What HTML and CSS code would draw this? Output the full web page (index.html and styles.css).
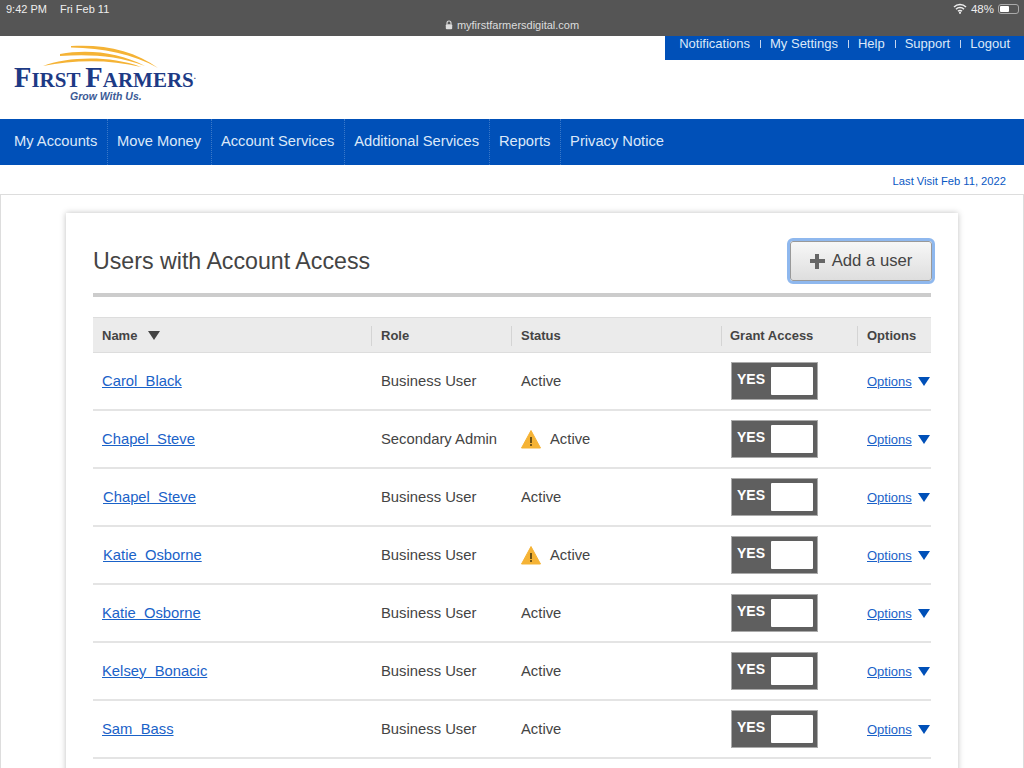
FILE: index.html
```html
<!DOCTYPE html>
<html>
<head>
	<meta http-equiv="Content-Type" content="text/html;charset=UTF-8">
	<title>Users with Account Access</title>
	<link rel="stylesheet" href="styles.css">
</head>
<body>
	<div class="statusbar">
		<div class="clock"><span>9:42 PM</span><span>Fri Feb 11</span></div>
		<div class="address">
			<svg width="8" height="10" viewBox="0 0 8 10"><path d="M2 4.5V3a2 2 0 0 1 4 0v1.5" fill="none" stroke="#ddd" stroke-width="1.1"/><rect x="0.8" y="4.3" width="6.4" height="5" rx="1" fill="#ddd"/></svg>
			<span>myfirstfarmersdigital.com</span>
		</div>
		<div class="sysicons">
			<svg width="14" height="11" viewBox="0 0 14 11"><path d="M1 4a8.5 8.5 0 0 1 12 0M3 6.2a5.6 5.6 0 0 1 8 0M5 8.3a2.8 2.8 0 0 1 4 0" fill="none" stroke="#eee" stroke-width="1.5"/><circle cx="7" cy="9.8" r="1.1" fill="#eee"/></svg>
			<span>48%</span>
			<span class="battery"><i></i></span>
		</div>
	</div>

	<div class="header">
		<div class="logo">
			<svg class="swoosh" width="116" height="24" viewBox="0 0 116 24"><path d="M0 21C24 12 66 10 98 22C66 14 30 15 0 21Z" fill="#f5b335"/><path d="M17 9C44 4 76 7 102 21C74 10 44 9 17 11Z" fill="#f5b335"/><path d="M28 1C62 -1 92 6 115 23C90 9 60 3 28 2.500Z" fill="#f5b335"/></svg>
			<div class="brand"><b>F</b>IRST <b>F</b>ARMERS<sup>.</sup></div>
			<div class="tagline">Grow With Us.</div>
		</div>
		<ul class="toplinks">
			<li>Notifications</li>
			<li>My Settings</li>
			<li>Help</li>
			<li>Support</li>
			<li>Logout</li>
		</ul>
	</div>

	<ul class="mainnav">
		<li>My Accounts</li>
		<li>Move Money</li>
		<li>Account Services</li>
		<li>Additional Services</li>
		<li>Reports</li>
		<li>Privacy Notice</li>
	</ul>

	<div class="lastvisit">Last Visit Feb 11, 2022</div>

	<div class="content">
		<div class="card">
			<div class="cardhead">
				<h1>Users with Account Access</h1>
				<a href="#" class="addbtn"><span class="plus"></span>Add a user</a>
			</div>
			<table class="users">
				<thead>
					<tr>
						<th class="c_name"><span>Name<i class="sortarrow"></i></span></th>
						<th class="c_role"><span>Role</span></th>
						<th class="c_status"><span>Status</span></th>
						<th class="c_grant"><span>Grant Access</span></th>
						<th class="c_opts"><span>Options</span></th>
					</tr>
				</thead>
				<tbody>
					<tr class="first">
						<td><a href="#">Carol&nbsp; Black</a></td>
						<td>Business User</td>
						<td>Active</td>
						<td><div class="toggle"><b>YES</b><i></i></div></td>
						<td><a href="#" class="optlink">Options</a><i class="optarrow"></i></td>
					</tr>
					<tr>
						<td><a href="#">Chapel&nbsp; Steve</a></td>
						<td>Secondary Admin</td>
						<td><div class="warned"><svg width="20" height="20" viewBox="0 0 20 20"><path d="M10 1.5L19.5 19H.5Z" fill="#f5b335" stroke="#f5b335" stroke-linejoin="round"/><path d="M10 8v6" stroke="#4a3a10" stroke-width="1.6"/><circle cx="10" cy="16" r="1" fill="#4a3a10"/></svg>Active</div></td>
						<td><div class="toggle"><b>YES</b><i></i></div></td>
						<td><a href="#" class="optlink">Options</a><i class="optarrow"></i></td>
					</tr>
					<tr>
						<td><a href="#" class="shift">Chapel&nbsp; Steve</a></td>
						<td>Business User</td>
						<td>Active</td>
						<td><div class="toggle"><b>YES</b><i></i></div></td>
						<td><a href="#" class="optlink">Options</a><i class="optarrow"></i></td>
					</tr>
					<tr>
						<td><a href="#" class="shift">Katie&nbsp; Osborne</a></td>
						<td>Business User</td>
						<td><div class="warned"><svg width="20" height="20" viewBox="0 0 20 20"><path d="M10 1.5L19.5 19H.5Z" fill="#f5b335" stroke="#f5b335" stroke-linejoin="round"/><path d="M10 8v6" stroke="#4a3a10" stroke-width="1.6"/><circle cx="10" cy="16" r="1" fill="#4a3a10"/></svg>Active</div></td>
						<td><div class="toggle"><b>YES</b><i></i></div></td>
						<td><a href="#" class="optlink">Options</a><i class="optarrow"></i></td>
					</tr>
					<tr>
						<td><a href="#">Katie&nbsp; Osborne</a></td>
						<td>Business User</td>
						<td>Active</td>
						<td><div class="toggle"><b>YES</b><i></i></div></td>
						<td><a href="#" class="optlink">Options</a><i class="optarrow"></i></td>
					</tr>
					<tr>
						<td><a href="#">Kelsey&nbsp; Bonacic</a></td>
						<td>Business User</td>
						<td>Active</td>
						<td><div class="toggle"><b>YES</b><i></i></div></td>
						<td><a href="#" class="optlink">Options</a><i class="optarrow"></i></td>
					</tr>
					<tr>
						<td><a href="#">Sam&nbsp; Bass</a></td>
						<td>Business User</td>
						<td>Active</td>
						<td><div class="toggle"><b>YES</b><i></i></div></td>
						<td><a href="#" class="optlink">Options</a><i class="optarrow"></i></td>
					</tr>
				</tbody>
			</table>
		</div>
	</div>
</body>
</html>
```

FILE: styles.css
```css
*{
	margin: 0;
	padding: 0;
	box-sizing: border-box;
}
html,body{
	height: 768px;
	overflow: hidden;
}
body{
	font-family: "Liberation Sans", Arial, sans-serif;
	color: #444;
	background-color: #fff;
}
ul{
	list-style: none;
}
.statusbar{
	height: 36px;
	background-color: #555;
	color: #eee;
	font-size: 11px;
	position: relative;
	display: flex;
	justify-content: space-between;
	padding: 3px 3px 0 6px;
}
.clock span{
	margin-right: 13px;
}
.address{
	position: absolute;
	left: 0;
	right: 0;
	top: 19px;
	display: flex;
	justify-content: center;
	align-items: center;
	gap: 4px;
	font-size: 11px;
	color: #ddd;
}
.sysicons{
	display: flex;
	align-items: flex-start;
	gap: 4px;
	font-size: 11.5px;
	height: 14px;
}
.battery{
	width: 21px;
	height: 10px;
	margin-top: 1px;
	border: 1px solid #aaa;
	border-radius: 3px;
	padding: 1px;
	margin-right: 2px;
}
.battery i{
	display: block;
	width: 9px;
	height: 6px;
	background-color: #fff;
	border-radius: 1px;
}
.header{
	height: 83px;
	display: flex;
	justify-content: space-between;
	align-items: flex-start;
}
.logo{
	width: 220px;
	padding: 9px 0 0 14px;
}
.swoosh{
	display: block;
	margin-left: 29px;
}
.brand{
	font-family: "Liberation Serif", serif;
	font-weight: bold;
	font-size: 21px;
	line-height: 22px;
	color: #1d3a85;
	white-space: nowrap;
	margin-top: -2px;
}
.brand b{
	font-size: 28.5px;
}
.brand sup{
	font-size: 8px;
	line-height: 0;
}
.tagline{
	font-size: 10.5px;
	line-height: 12px;
	font-style: italic;
	font-weight: bold;
	color: #3b5a96;
	margin: -1px 0 0 56px;
}
.toplinks{
	width: 359px;
	height: 24px;
	background-color: #0050b8;
	color: #dce8f8;
	font-size: 13px;
	display: flex;
	justify-content: flex-end;
	align-items: center;
	padding: 0 14px 9px 0;
}
.toplinks li + li{
	margin-left: 10px;
	padding-left: 10px;
	background: linear-gradient(#c5d5ee, #c5d5ee) left center / 1px 8px no-repeat;
}
.mainnav{
	height: 46px;
	background-color: #0050b8;
	color: #dce8f8;
	font-size: 14.7px;
	display: flex;
}
.mainnav li{
	padding: 0 9.4px;
	line-height: 45px;
	border-right: 1px dotted #3a78c8;
}
.mainnav li:first-child{
	padding-left: 14px;
}
.mainnav li:last-child{
	border-right: 0;
}
.lastvisit{
	height: 29px;
	text-align: right;
	font-size: 11.2px;
	line-height: 32px;
	color: #0a58c4;
	padding-right: 18px;
}
.content{
	height: 574px;
	border: 1px solid #ddd;
	border-bottom: 0;
	padding: 18px 65px 0 65px;
	background-color: #fff;
}
.card{
	height: 600px;
	background-color: #fff;
	box-shadow: 0 0 6px rgba(0,0,0,.25);
	padding: 0 27px;
}
.cardhead{
	height: 84px;
	border-bottom: 4px solid #ccc;
	display: flex;
	justify-content: space-between;
	padding-top: 28px;
}
.cardhead h1{
	font-size: 23.2px;
	font-weight: normal;
	line-height: 40px;
	color: #444;
}
.addbtn{
	width: 142px;
	height: 40px;
	margin-right: -1px;
	border: 1px solid #999;
	outline: 3px solid #8fb8ee;
	border-radius: 3px;
	background: linear-gradient(#f7f7f7, #dedede);
	color: #444;
	font-size: 16.7px;
	text-decoration: none;
	display: flex;
	align-items: center;
	justify-content: center;
	gap: 7px;
}
.plus{
	width: 15px;
	height: 15px;
	background:
		linear-gradient(#666, #666) center / 15px 4px no-repeat,
		linear-gradient(#666, #666) center / 4px 15px no-repeat;
}
.users{
	width: 838px;
	margin-top: 20px;
	border-collapse: collapse;
	table-layout: fixed;
}
.users th{
	height: 35px;
	padding-top: 2px;
	background-color: #ebebeb;
	border-top: 1px solid #ddd;
	border-bottom: 1px solid #ddd;
	font-size: 13px;
	color: #444;
	text-align: left;
}
.users th span{
	display: block;
	padding-left: 9px;
	height: 20px;
	line-height: 20px;
	border-left: 1px solid #d4d4d4;
}
.users th.c_name span{
	border-left: 0;
}
.users th.c_grant span{
	padding-left: 8px;
}
.c_name{
	width: 278px;
}
.c_role{
	width: 140px;
}
.c_status{
	width: 210px;
}
.c_grant{
	width: 136px;
}
.c_opts{
	width: 74px;
}
.sortarrow{
	display: inline-block;
	margin-left: 11px;
	border-left: 6.5px solid transparent;
	border-right: 6.5px solid transparent;
	border-top: 9px solid #444;
}
.users td{
	height: 58px;
	border-bottom: 2px solid #e4e4e4;
	font-size: 14.8px;
	padding-left: 10px;
	color: #444;
}
.users tr.first td{
	height: 57px;
}
.users td:first-child{
	padding-left: 9px;
}
.users td a{
	color: #1a62c8;
}
.users td a.shift{
	margin-left: 1px;
}
.warned{
	display: flex;
	align-items: center;
	gap: 9px;
}
.toggle{
	width: 87px;
	height: 38px;
	background-color: #5f5f5f;
	border: 1px solid #aaa;
	padding: 4px;
	display: flex;
	justify-content: space-between;
	color: #fff;
	font-size: 14px;
	line-height: 24px;
}
.toggle b{
	padding-left: 1px;
}
.toggle i{
	width: 42px;
	height: 28px;
	background-color: #fff;
	border-radius: 1px;
}
.users td a.optlink{
	font-size: 13px;
	color: #1a62c8;
}
.optarrow{
	display: inline-block;
	margin-left: 6px;
	border-left: 6.5px solid transparent;
	border-right: 6.5px solid transparent;
	border-top: 9px solid #0050b8;
}
```
